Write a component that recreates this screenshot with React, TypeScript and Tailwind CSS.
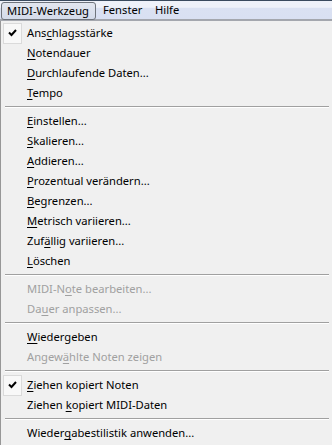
import React from "react";

type Item =
  | { type: "sep" }
  | { type: "item"; pre: string; u: string; post: string; checked?: boolean; disabled?: boolean };

const items: Item[] = [
  { type: "item", pre: "Ans", u: "c", post: "hlagsstärke", checked: true },
  { type: "item", pre: "", u: "N", post: "otendauer" },
  { type: "item", pre: "", u: "D", post: "urchlaufende Daten..." },
  { type: "item", pre: "", u: "T", post: "empo" },
  { type: "sep" },
  { type: "item", pre: "", u: "E", post: "instellen..." },
  { type: "item", pre: "", u: "S", post: "kalieren..." },
  { type: "item", pre: "", u: "A", post: "ddieren..." },
  { type: "item", pre: "", u: "P", post: "rozentual verändern..." },
  { type: "item", pre: "", u: "B", post: "egrenzen..." },
  { type: "item", pre: "", u: "M", post: "etrisch variieren..." },
  { type: "item", pre: "Zuf", u: "ä", post: "llig variieren..." },
  { type: "item", pre: "", u: "L", post: "öschen" },
  { type: "sep" },
  { type: "item", pre: "MIDI-N", u: "o", post: "te bearbeiten...", disabled: true },
  { type: "item", pre: "Da", u: "u", post: "er anpassen...", disabled: true },
  { type: "sep" },
  { type: "item", pre: "", u: "W", post: "iedergeben" },
  { type: "item", pre: "Angew", u: "ä", post: "hlte Noten zeigen", disabled: true },
  { type: "sep" },
  { type: "item", pre: "", u: "Z", post: "iehen kopiert Noten", checked: true },
  { type: "item", pre: "Ziehen ", u: "k", post: "opiert MIDI-Daten" },
  { type: "sep" },
  { type: "item", pre: "Wieder", u: "g", post: "abestilistik anwenden..." },
];

function Check() {
  return (
    <div className="w-[19px] h-[21px] border border-[#dadada] bg-[#f8f8f8] flex items-center justify-center">
      <svg width="9" height="8" viewBox="0 0 9 8">
        <path d="M1 3.5 L3.5 6 L8 1" stroke="#000" strokeWidth="2" fill="none" />
      </svg>
    </div>
  );
}

export default function App() {
  return (
    <div
      className="w-[332px] h-[445px] bg-[#f0f0f0] overflow-hidden text-[11.2px] text-black"
      style={{ fontFamily: "'Noto Sans', 'Open Sans', sans-serif" }}
    >
      <div className="h-[21px] border-t border-[#3a4a5e] border-b-2 border-b-[#a4a7ae] bg-[linear-gradient(#eef1f9_0%,#eef1f9_35%,#dae1f2_40%,#d9e0f2_100%)] flex items-stretch whitespace-nowrap text-[11.2px]">
        <div className="shrink-0 ml-[1px] mt-[1px] w-[95px] h-[18px] rounded-[3px] border border-[#6f747c] bg-[linear-gradient(#e2e6ef,#d4dbea)] flex items-center pl-[5px] pt-[1px]">
          MIDI-Werkzeug
        </div>
        <div className="shrink-0 w-[59px] pl-[7px] flex items-center pt-[1px]">Fenster</div>
        <div className="shrink-0 flex items-center pt-[1px]">Hilfe</div>
      </div>
      <div className="border-l border-[#979797] h-full pt-[2px]">
        {items.map((it, i) =>
          it.type === "sep" ? (
            <div key={i} className="h-[8px] flex items-center pl-[4px] pr-[3px]">
              <div className="w-full h-[2px] border-t border-[#a0a0a0] border-b border-b-white" />
            </div>
          ) : (
            <div key={i} className="h-[20px] flex items-center relative whitespace-nowrap">
              <div className="w-[26px] pl-[2px] flex items-center">
                {it.checked ? <Check /> : null}
              </div>
              <span className={"leading-none " + (it.disabled ? "text-[#a0a0a0]" : "text-black")}>
                {it.pre}
                <span className="underline underline-offset-[2px]">{it.u}</span>
                {it.post}
              </span>
            </div>
          )
        )}
      </div>
    </div>
  );
}
